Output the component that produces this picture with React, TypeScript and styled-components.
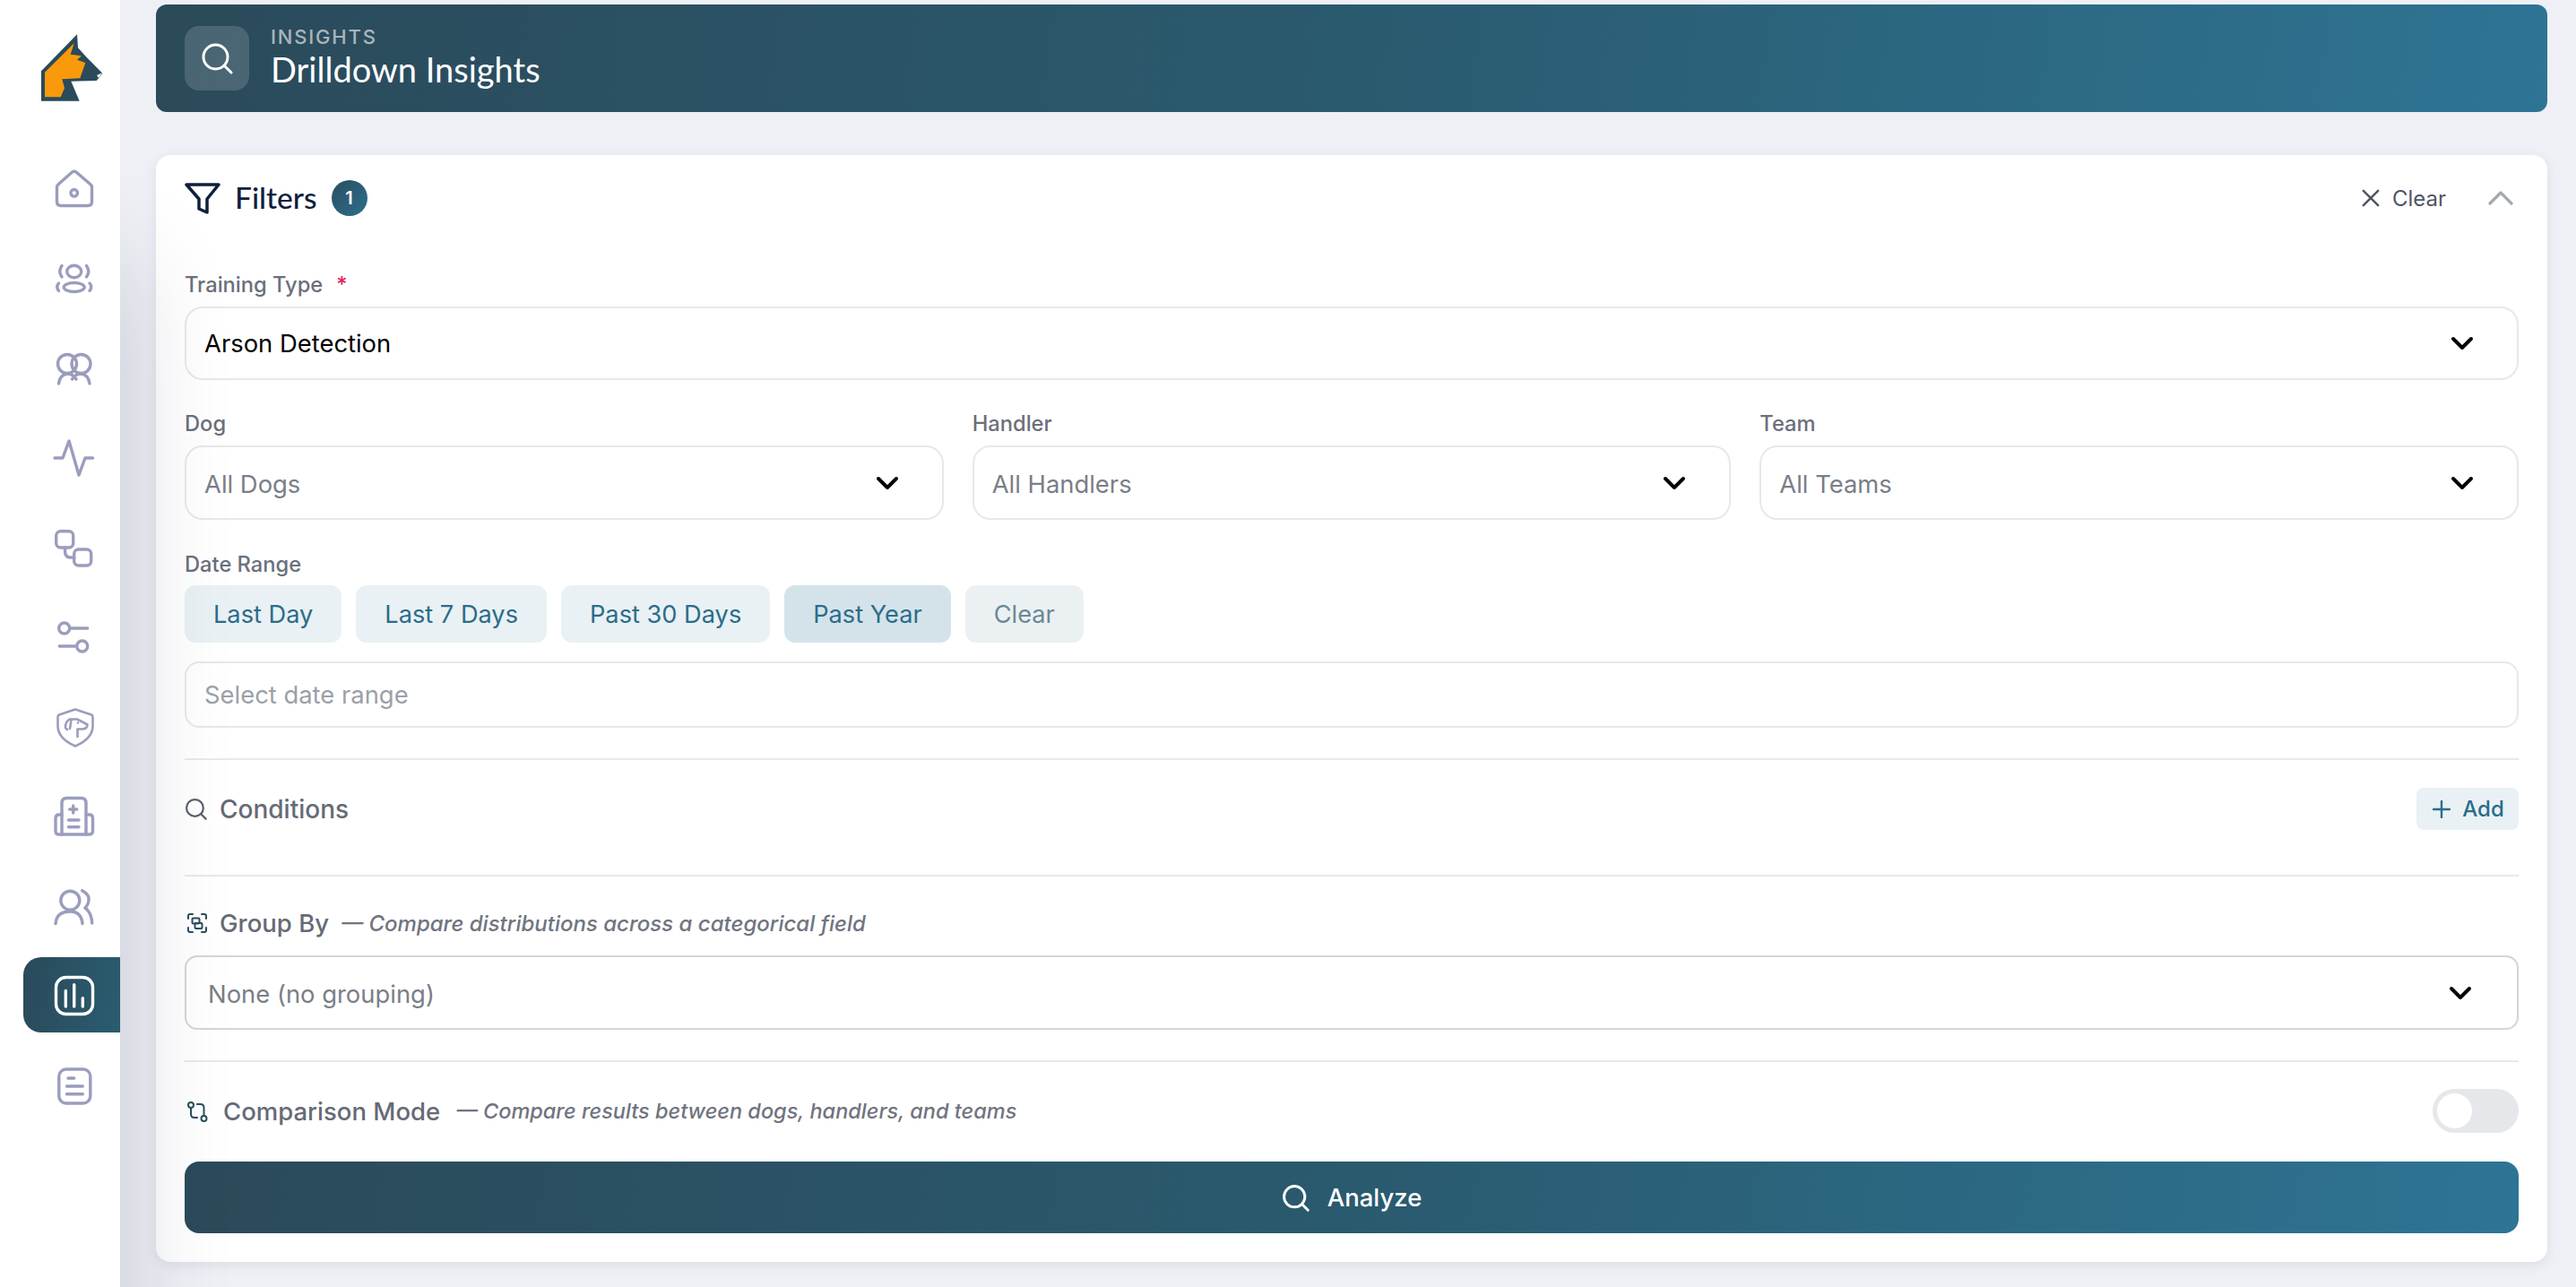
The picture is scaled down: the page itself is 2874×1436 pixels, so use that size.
import React from 'react';
import styled, { createGlobalStyle } from 'styled-components';

const GlobalStyle = createGlobalStyle`
  * { box-sizing: border-box; }
  html, body { margin: 0; padding: 0; height: 100%; }
  body {
    background: #eef0f5;
    font-family: Inter, "Liberation Sans", sans-serif;
    overflow: hidden;
  }
`;

const brand = 'linear-gradient(100deg, #2b4a5a 0%, #2a5a6e 50%, #2e7494 100%)';

const Shell = styled.div`
  display: flex;
  height: 1436px;
  width: 2874px;
`;

const Sidebar = styled.aside`
  width: 134px;
  flex: none;
  background: #fff;
  position: relative;
  z-index: 2;
  box-shadow: 0 300px 120px rgba(40, 50, 90, 0.22);
  padding: 30px 0 0 26px;
`;

const LogoMark = styled.svg`
  display: block;
  width: 90px;
  height: 90px;
  margin: 0 0 49px 10px;
`;

const NavList = styled.nav`
  display: flex;
  flex-direction: column;
  gap: 15.9px;
`;

const NavItem = styled.div<{ $active?: boolean }>`
  height: 84px;
  display: flex;
  align-items: center;
  justify-content: center;
  padding-left: 6px;
  border-radius: 20px 0 0 20px;
  color: ${(p) => (p.$active ? '#fff' : '#9a9dbd')};
  background: ${(p) => (p.$active ? 'linear-gradient(100deg, #2a4a5a, #2a5c70)' : 'transparent')};
`;

const NavIcon = styled.svg`
  width: 48px;
  height: 48px;
  fill: none;
  stroke: currentColor;
  stroke-width: 3.4;
  stroke-linecap: round;
  stroke-linejoin: round;
`;

const Main = styled.main`
  flex: 1;
  min-width: 0;
  padding: 5px 32px 0 40px;
`;

const Banner = styled.header`
  height: 120px;
  border-radius: 12px;
  background: ${brand};
  display: flex;
  align-items: center;
  gap: 24px;
  padding: 0 32px;
  color: #fff;
`;

const BannerIcon = styled.div`
  width: 72px;
  height: 72px;
  border-radius: 16px;
  background: rgba(255, 255, 255, 0.15);
  display: flex;
  align-items: center;
  justify-content: center;
`;

const BannerText = styled.div`
  padding-bottom: 4px;
`;

const Eyebrow = styled.div`
  font-size: 22px;
  line-height: 26px;
  letter-spacing: 1.8px;
  font-weight: 500;
  color: rgba(255, 255, 255, 0.6);
`;

const PageTitle = styled.h1`
  margin: 2px 0 0;
  font-family: Lato, sans-serif;
  font-size: 38px;
  line-height: 42px;
  font-weight: 400;
`;

const Card = styled.section`
  margin-top: 48px;
  background: #fff;
  border-radius: 16px;
  padding: 28px 32px 32px;
  box-shadow: 0 4px 14px rgba(40, 50, 90, 0.09);
`;

const CardHead = styled.div`
  height: 40px;
  display: flex;
  align-items: center;
  justify-content: space-between;
`;

const CardTitle = styled.div`
  display: flex;
  align-items: center;
  font-family: Lato, sans-serif;
  font-size: 33.5px;
  font-weight: 500;
  color: #0f1f3d;
  line-height: 36px;
`;

const TitleLabel = styled.span`
  padding-bottom: 3px;
`;

const FilterIcon = styled.svg`
  width: 40px;
  height: 36px;
  margin-right: 16px;
  fill: none;
  stroke: #0f1f3d;
  stroke-width: 3.5;
  stroke-linejoin: round;
`;

const Badge = styled.span`
  width: 40px;
  height: 40px;
  margin-left: 16px;
  border-radius: 50%;
  background: linear-gradient(135deg, #2b4d5f, #2d6f8e);
  color: #fff;
  font-family: Inter, sans-serif;
  font-size: 20px;
  font-weight: 600;
  display: flex;
  align-items: center;
  justify-content: center;
`;

const HeadActions = styled.div`
  display: flex;
  align-items: center;
`;

const ClearLink = styled.div`
  display: flex;
  align-items: center;
  gap: 14px;
  font-size: 24px;
  color: #4f5663;
`;

const Collapse = styled.svg`
  width: 30px;
  height: 18px;
  margin: 0 5px 0 46px;
  fill: none;
  stroke: #a4a9b0;
  stroke-width: 3.2;
  stroke-linecap: round;
  stroke-linejoin: round;
`;

const Field = styled.div<{ $top?: number }>`
  margin-top: ${(p) => p.$top ?? 0}px;
  min-width: 0;
`;

const Label = styled.label`
  display: block;
  height: 30px;
  line-height: 30px;
  font-size: 23.7px;
  font-weight: 500;
  color: #6b6f7c;
`;

const Required = styled.span`
  color: #e0245e;
  margin-left: 15px;
`;

const Select = styled.div<{ $gap?: number; $strong?: boolean; $height?: number; $pad?: number; $chev?: number }>`
  margin-top: ${(p) => p.$gap ?? 9}px;
  height: ${(p) => p.$height ?? 83}px;
  border: 2px solid ${(p) => (p.$strong ? '#d3d5d9' : '#e6e8eb')};
  border-radius: ${(p) => (p.$strong ? 14 : 20)}px;
  background: #fff;
  display: flex;
  align-items: center;
  justify-content: space-between;
  padding: 0 ${(p) => p.$chev ?? 48}px 0 ${(p) => p.$pad ?? 20}px;
`;

const SelectText = styled.span<{ $filled?: boolean }>`
  font-size: 27.4px;
  margin-top: ${(p) => (p.$filled ? 0 : 2)}px;
  color: ${(p) => (p.$filled ? '#000' : '#7a7e88')};
`;

const Chevron = styled.svg`
  width: 26px;
  height: 16px;
  fill: none;
  stroke: #000;
  stroke-width: 4;
  stroke-linecap: round;
  stroke-linejoin: round;
`;

const Triple = styled.div`
  margin-top: 34px;
  display: grid;
  grid-template-columns: repeat(3, 1fr);
  gap: 32px;
`;

const QuickRow = styled.div`
  margin-top: 8px;
  display: flex;
  gap: 16px;
`;

const Quick = styled.button<{ $active?: boolean; $muted?: boolean }>`
  height: 64px;
  padding: 0 32px;
  border: 0;
  border-radius: 12px;
  font-family: inherit;
  font-size: 27.2px;
  background: ${(p) => (p.$active ? '#d4e3ea' : p.$muted ? '#ebf1f3' : '#e9f1f4')};
  color: ${(p) => (p.$muted ? '#6c8794' : '#2b6c8a')};
`;

const DateInput = styled.div`
  margin-top: 21px;
  height: 74px;
  border: 2px solid #e6e8eb;
  border-radius: 16px;
  display: flex;
  align-items: center;
  padding-left: 20px;
  font-size: 27.4px;
  color: #9ba0a8;
`;

const Divider = styled.hr<{ $top: number }>`
  margin: ${(p) => p.$top}px 0 0;
  border: 0;
  height: 2px;
  background: #e8e9ec;
`;

const Row = styled.div<{ $top: number }>`
  margin-top: ${(p) => p.$top}px;
  display: flex;
  align-items: center;
  justify-content: space-between;
`;

const SectionTitle = styled.div<{ $gap?: number; $size?: number }>`
  display: flex;
  align-items: center;
  gap: ${(p) => p.$gap ?? 13}px;
  font-size: ${(p) => p.$size ?? 27.5}px;
  font-weight: 500;
  color: #666a76;
`;

const Hint = styled.span<{ $size?: number }>`
  font-size: ${(p) => p.$size ?? 24}px;
  font-weight: 500;
  font-style: italic;
  color: #70747f;
  margin-left: 1px;
`;

const SmallIcon = styled.svg`
  width: 24px;
  height: 24px;
  margin-left: 2px;
  flex: none;
  fill: none;
  stroke: #2b4d5d;
  stroke-width: 2;
  stroke-linecap: round;
  stroke-linejoin: round;
`;

const AddButton = styled.button`
  height: 47px;
  width: 114px;
  border: 0;
  border-radius: 8px;
  background: #e9f1f4;
  color: #2b6c8a;
  font-family: inherit;
  font-size: 24px;
  font-weight: 500;
  display: flex;
  align-items: center;
  justify-content: center;
  gap: 13px;
  padding-left: 8px;
`;

const Toggle = styled.div`
  width: 96px;
  height: 49px;
  border-radius: 25px;
  background: #e5e7eb;
  padding: 5px;
  display: flex;
`;

const Knob = styled.span`
  width: 39px;
  height: 39px;
  border-radius: 50%;
  background: #fff;
`;

const Analyze = styled.button`
  display: flex;
  width: 100%;
  height: 80px;
  margin-top: 32px;
  border: 0;
  border-radius: 16px;
  background: ${brand};
  color: #fff;
  font-family: inherit;
  font-size: 27.5px;
  font-weight: 500;
  align-items: center;
  justify-content: center;
  gap: 20px;
`;

function SearchGlyph({ size, stroke, color }: { size: number; stroke: number; color: string }) {
  return (
    <svg width={size} height={size} viewBox="0 0 36 36" fill="none" stroke={color} strokeWidth={stroke} strokeLinecap="round">
      <circle cx="16.5" cy="16.5" r="13.5" />
      <path d="M27 27l7 7" />
    </svg>
  );
}

function Down() {
  return (
    <Chevron viewBox="0 0 26 16">
      <path d="M3 3l10 10L23 3" />
    </Chevron>
  );
}

const navIcons: React.ReactNode[] = [
  <>
    <path d="M4.5 21.5Q4.5 20 6 18.8L21.5 5Q23.7 3.3 26 5L42 18.8Q43.5 20 43.5 21.5V38Q43.5 42.5 39 42.5H9Q4.5 42.5 4.5 38Z" />
    <circle cx="23.7" cy="28.3" r="3.8" />
  </>,
  <>
    <ellipse cx="23.7" cy="16" rx="8" ry="6.8" />
    <ellipse cx="23.7" cy="33.5" rx="11.5" ry="5" />
    <path d="M10 9.5Q5.5 16 10 22M37.5 9.5Q42 16 37.5 22M6.5 29Q3 33 6.5 37.5M41 29Q44.5 33 41 37.5" />
  </>,
  <>
    <circle cx="16" cy="19" r="10.5" />
    <circle cx="31.5" cy="19" r="10.5" />
    <path d="M6.5 41Q8 31 16 30Q22 30 26 36M41 41Q39.5 31 31.5 30Q25.5 30 21.5 36" />
  </>,
  <path d="M2 24H11L18 5L29 43L36 24H44.5" />,
  <>
    <rect x="3.7" y="5.7" width="19" height="18.3" rx="5" />
    <rect x="23.7" y="26" width="19" height="18" rx="5" />
    <path d="M13.5 24V28Q13.5 35 20 35H23.7" />
  </>,
  <>
    <circle cx="12.7" cy="15" r="6" />
    <path d="M19 15H38.7M7.3 35H25" />
    <circle cx="32.7" cy="35" r="6" />
  </>,
  <g strokeWidth="2.6">
    <path d="M25 5.5L43 11.5Q44.5 12 44.5 14V24Q44.5 38 25 46.5Q5.5 38 5.5 24V14Q5.5 12 7 11.5Z" />
    <path d="M16 28L14 26Q13.5 20 18.5 16.5H27L33 19.5L38.5 22.5Q38.5 27 33 27.5H27.5V36M20.5 17L19 27M28 20.5V20.6" />
  </g>,
  <>
    <path d="M10 45V10Q10 4.5 15.5 4.5H31.5Q37 4.5 37 10V45" />
    <path d="M10 23H7Q3 23 3 27V41Q3 45 6 45H41Q44.5 45 44.5 41V27Q44.5 23 41 23H37" />
    <path d="M22.7 13V21M18.7 17H26.7M17.5 29H29M17.5 36.7H29" />
  </>,
  <>
    <circle cx="19.3" cy="18.7" r="10.5" />
    <path d="M3 44.5Q4 31 19.3 31Q31.7 31 33 44.5M32.7 7.7Q40.3 12 40 17Q40 23 36 27Q43 32 43.7 44" />
  </>,
  <>
    <rect x="3.5" y="4.5" width="41" height="41" rx="11" />
    <path d="M14.3 19.5V37M23.7 12.7V37M33.3 27.7V37" />
  </>,
  <>
    <rect x="6.8" y="7" width="35" height="38" rx="8" />
    <path d="M17 17H23.7M15.5 26H33.3M15.5 34.7H33.3" />
  </>,
];

export default function App() {
  return (
    <>
      <GlobalStyle />
      <Shell>
        <Sidebar>
          <LogoMark viewBox="0 0 270 270">
            <path fill="#2b4a5a" d="M30 148L150 25L153 70L180 100L235 155L215 180L130 182L158 248H30Z" />
            <path fill="#f89a0c" d="M42 152L140 55L128 92L165 97L150 110L178 120L160 172L100 175L108 205L95 235H42Z" />
            <path fill="#fff" d="M216 162L234 154L222 170Z" />
          </LogoMark>
          <NavList>
            {navIcons.map((icon, i) => (
              <NavItem key={i} $active={i === 9}>
                <NavIcon viewBox="0 0 48 48">{icon}</NavIcon>
              </NavItem>
            ))}
          </NavList>
        </Sidebar>
        <Main>
          <Banner>
            <BannerIcon>
              <SearchGlyph size={36} stroke={3} color="#fff" />
            </BannerIcon>
            <BannerText>
              <Eyebrow>INSIGHTS</Eyebrow>
              <PageTitle>Drilldown Insights</PageTitle>
            </BannerText>
          </Banner>
          <Card>
            <CardHead>
              <CardTitle>
                <FilterIcon viewBox="0 0 40 36">
                  <path d="M2 3H38L25 19V34L16 30V19Z" />
                </FilterIcon>
                <TitleLabel>Filters</TitleLabel>
                <Badge>1</Badge>
              </CardTitle>
              <HeadActions>
                <ClearLink>
                  <svg width="20" height="20" viewBox="0 0 22 22" fill="none" stroke="#4f5663" strokeWidth="2.8" strokeLinecap="round">
                    <path d="M2 2l18 18M20 2L2 20" />
                  </svg>
                  Clear
                </ClearLink>
                <Collapse viewBox="0 0 30 18">
                  <path d="M3 15L15 3L27 15" />
                </Collapse>
              </HeadActions>
            </CardHead>

            <Field $top={62}>
              <Label>
                Training Type<Required>*</Required>
              </Label>
              <Select $height={82}>
                <SelectText $filled>Arson Detection</SelectText>
                <Down />
              </Select>
            </Field>

            <Triple>
              {[
                ['Dog', 'All Dogs'],
                ['Handler', 'All Handlers'],
                ['Team', 'All Teams'],
              ].map(([label, value]) => (
                <Field key={label}>
                  <Label>{label}</Label>
                  <Select>
                    <SelectText>{value}</SelectText>
                    <Down />
                  </Select>
                </Field>
              ))}
            </Triple>

            <Field $top={35}>
              <Label>Date Range</Label>
              <QuickRow>
                <Quick>Last Day</Quick>
                <Quick>Last 7 Days</Quick>
                <Quick>Past 30 Days</Quick>
                <Quick $active>Past Year</Quick>
                <Quick $muted>Clear</Quick>
              </QuickRow>
              <DateInput>Select date range</DateInput>
            </Field>

            <Divider $top={34} />

            <Row $top={31}>
              <SectionTitle $size={28} $gap={14}>
                <SearchGlyph size={25} stroke={3.2} color="#5a5f6b" />
                Conditions
              </SectionTitle>
              <AddButton>
                <svg width="20" height="20" viewBox="0 0 20 20" fill="none" stroke="#2b6c8a" strokeWidth="2.4" strokeLinecap="round">
                  <path d="M10 1v18M1 10h18" />
                </svg>
                Add
              </AddButton>
            </Row>

            <Divider $top={50} />

            <Field $top={35}>
              <SectionTitle>
                <SmallIcon viewBox="0 0 24 24">
                  <path d="M2 7V4q0-2 2-2h3M17 2h3q2 0 2 2v3M22 17v3q0 2-2 2h-3M7 22H4q-2 0-2-2v-3" />
                  <rect x="6.5" y="6.5" width="8" height="6" rx="1" />
                  <rect x="9.5" y="12" width="8" height="6" rx="1" />
                </SmallIcon>
                Group By
                <Hint>— Compare distributions across a categorical field</Hint>
              </SectionTitle>
              <Select $gap={19} $strong $height={83} $pad={24} $chev={50}>
                <SelectText>None (no grouping)</SelectText>
                <Down />
              </Select>
            </Field>

            <Divider $top={34} />

            <Row $top={30}>
              <SectionTitle $gap={17}>
                <SmallIcon viewBox="0 0 24 24">
                  <circle cx="5" cy="5" r="3" />
                  <circle cx="19.5" cy="20" r="3" />
                  <path d="M5 8v7q0 4 4 4h3M12 4h3.5q4 0 4 4v9" />
                </SmallIcon>
                Comparison Mode
                <Hint $size={23.5}>— Compare results between dogs, handlers, and teams</Hint>
              </SectionTitle>
              <Toggle>
                <Knob />
              </Toggle>
            </Row>

            <Analyze>
              <SearchGlyph size={31} stroke={3.4} color="#fff" />
              Analyze
            </Analyze>
          </Card>
        </Main>
      </Shell>
    </>
  );
}
